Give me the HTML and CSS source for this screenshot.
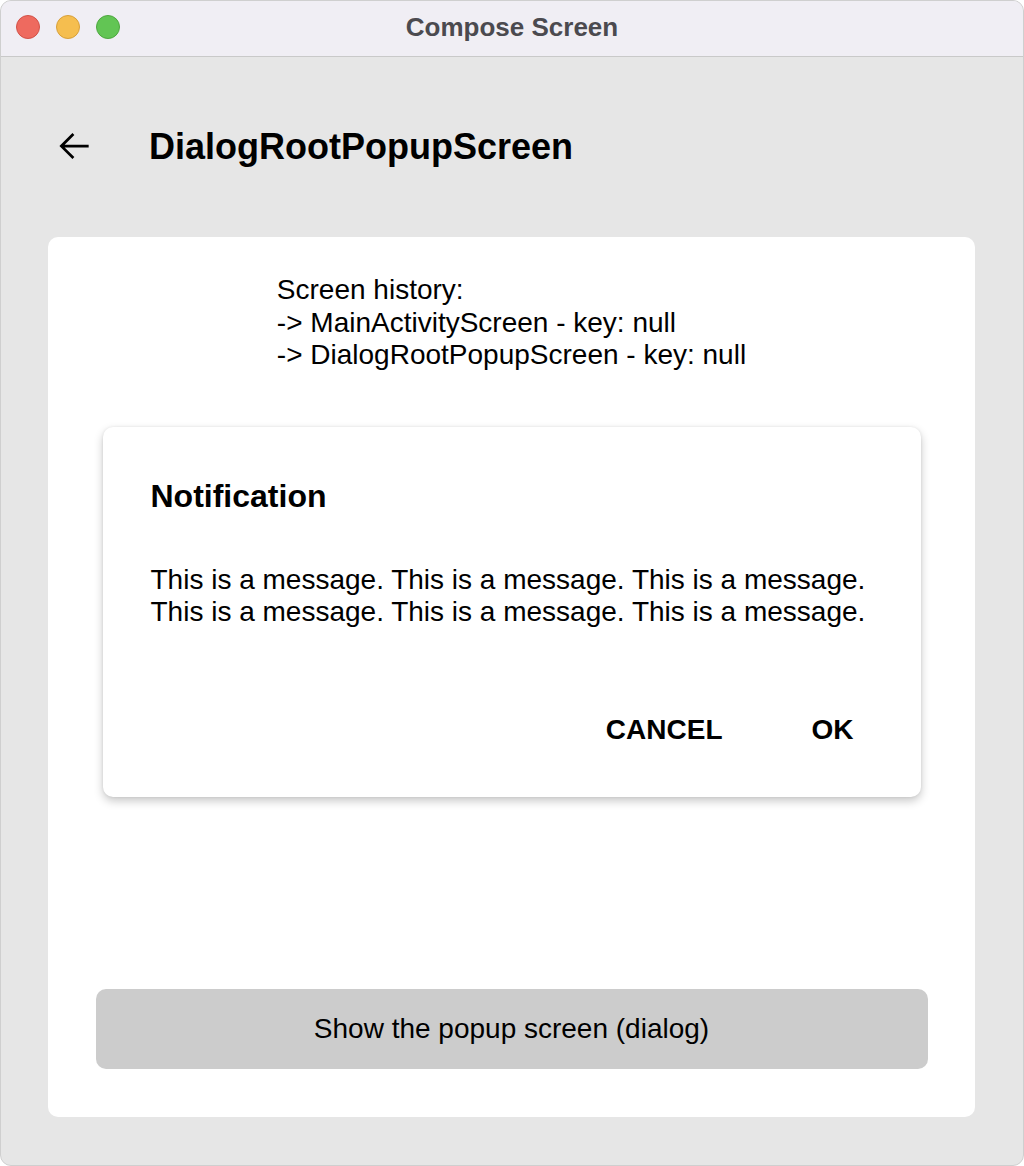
FILE: index.html
```html
<!DOCTYPE html>
<html>
<head>
<meta charset="utf-8">
<link rel="stylesheet" href="styles.css">
</head>
<body>
<div class="window">
  <div class="titlebar">
    <div class="lights">
      <span class="light red"></span>
      <span class="light yellow"></span>
      <span class="light green"></span>
    </div>
    <div class="wtitle">Compose Screen</div>
  </div>
  <div class="content">
    <div class="appbar">
      <svg class="back" width="44" height="44" viewBox="0 0 24 24"><path d="M20 11.25H6.9l5.3-5.3L11.15 4.9 4.05 12l7.1 7.1 1.05-1.05-5.3-5.3H20v-1.5z" fill="#000"/></svg>
      <div class="apptitle">DialogRootPopupScreen</div>
    </div>
    <div class="card">
      <div class="history">
        <div>Screen history:</div>
        <div>-&gt; MainActivityScreen - key: null</div>
        <div>-&gt; DialogRootPopupScreen - key: null</div>
      </div>
      <div class="dialog">
        <div class="dtitle">Notification</div>
        <div class="dmsg">This is a message. This is a message. This is a message.<br>This is a message. This is a message. This is a message.</div>
        <div class="dactions">
          <span class="act">CANCEL</span>
          <span class="act">OK</span>
        </div>
      </div>
      <div class="btn">Show the popup screen (dialog)</div>
    </div>
  </div>
</div>
</body>
</html>
```
FILE: styles.css
```css
html, body { margin: 0; padding: 0; background: #ffffff; }
body { font-family: "Liberation Sans", Arial, sans-serif; color: #000; }
.window {
  width: 1024px; height: 1166px; box-sizing: border-box;
  border-radius: 11px; overflow: hidden;
  background: #e6e6e6;
  display: flex; flex-direction: column;
  border: 1px solid #cfcfcf;
}
.titlebar {
  height: 55px; flex: none; position: relative;
  background: #f0eef4; border-bottom: 1px solid #c9c9c9;
  display: flex; align-items: center; justify-content: center;
}
.lights { position: absolute; left: 15px; top: 14px; display: flex; gap: 16px; }
.light { width: 24px; height: 24px; border-radius: 50%; box-sizing: border-box; }
.red { background: #ee6a5f; border: 1px solid #d25248; }
.yellow { background: #f5be4f; border: 1px solid #d8a03a; }
.green { background: #62c554; border: 1px solid #4ea73f; }
.wtitle { font-size: 26px; font-weight: bold; color: #4b4a4f; margin-top: -2px; }
.content { flex: 1; display: flex; flex-direction: column; padding: 0 48px 48px 47px; }
.appbar { height: 180px; flex: none; display: flex; align-items: center; }
.back { margin-left: 4px; margin-right: 53px; margin-top: -2px; }
.apptitle { font-size: 36px; font-weight: bold; margin-top: 0px; }
.card {
  flex: 1; background: #fff; border-radius: 10px;
  display: flex; flex-direction: column; align-items: center;
  padding: 37px 48px 48px;
}
.history { font-size: 28px; line-height: 32.5px; }
.dialog {
  margin-top: 55px; width: 818px; box-sizing: border-box;
  background: #fff; border-radius: 10px;
  box-shadow: 0 4px 10px rgba(0,0,0,0.22), 0 0 3px rgba(0,0,0,0.08);
  padding: 50px 48px 51px;
}
.dtitle { font-size: 32px; font-weight: bold; line-height: 38px; }
.dmsg { font-size: 28px; line-height: 32px; margin-top: 49px; }
.dactions { display: flex; justify-content: flex-end; gap: 89px; margin-top: 86px; padding-right: 19px; }
.act { font-size: 28px; font-weight: bold; line-height: 32px; }
.btn {
  margin-top: auto; width: 832px; height: 80px;
  background: #cccccc; border-radius: 10px;
  display: flex; align-items: center; justify-content: center;
  font-size: 28px;
}
```
